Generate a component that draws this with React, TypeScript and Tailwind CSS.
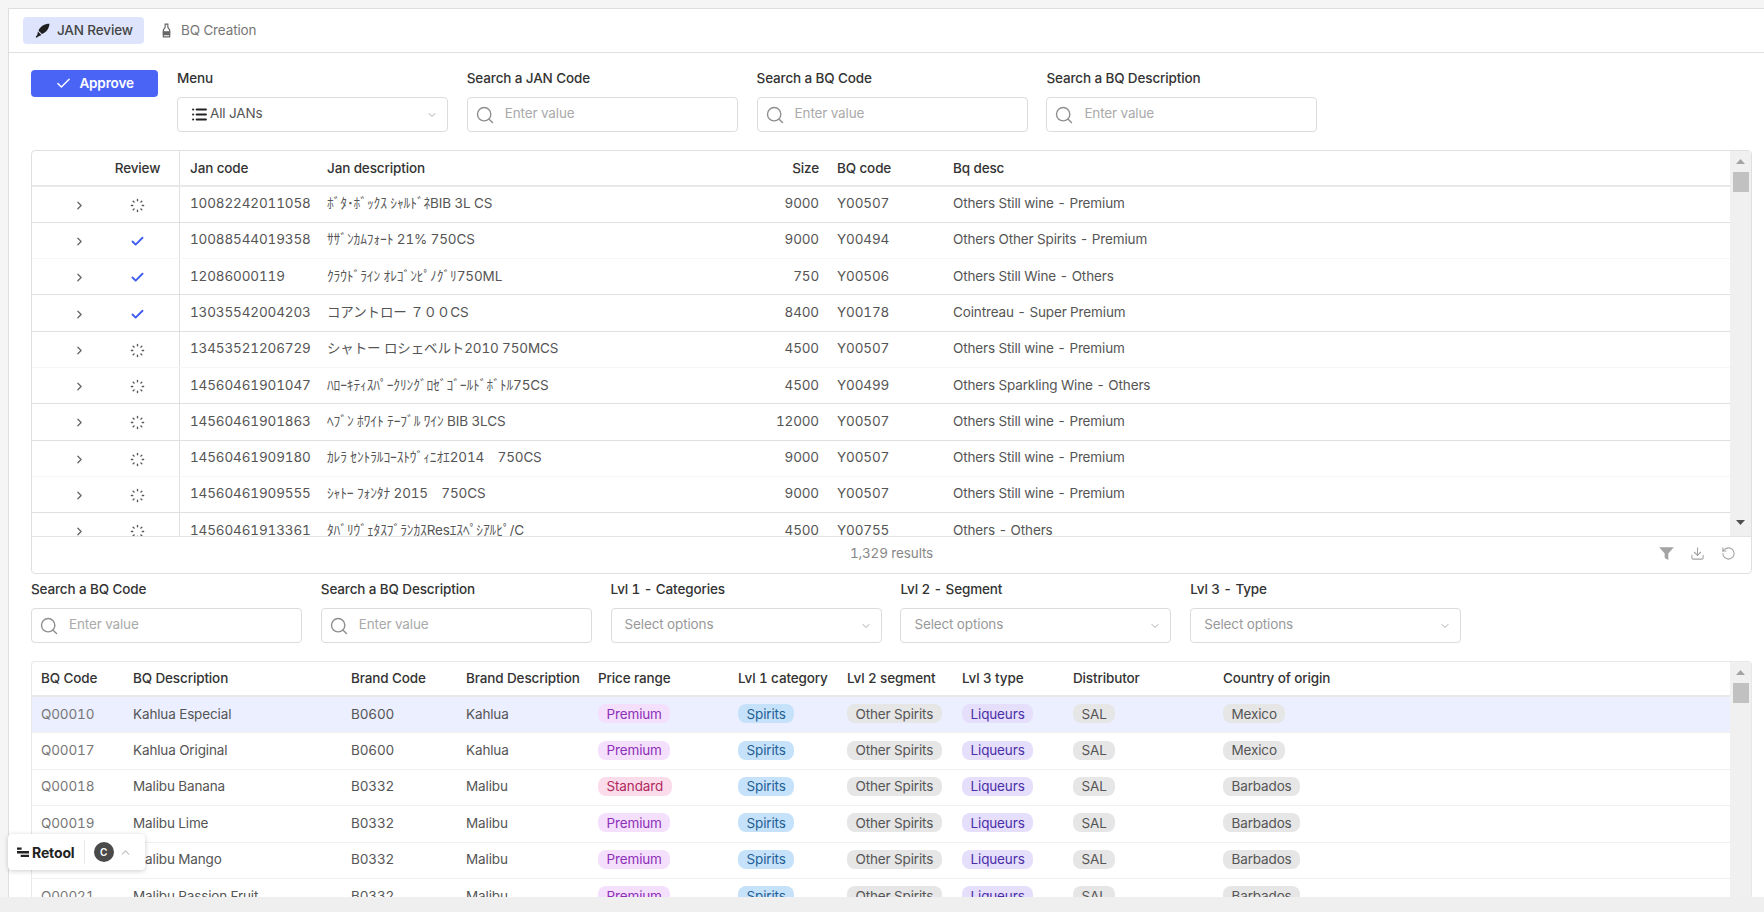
import { Check, ChevronDown, ChevronRight, ChevronUp, Download, List, RotateCcw, Search } from "lucide-react";

const janRows = [
  { code: "10082242011058", name: "ﾎﾞﾀ･ﾎﾞｯｸｽ ｼｬﾙﾄﾞﾈBIB 3L CS", size: "9000", bq: "Y00507", desc: "Others Still wine - Premium", done: false, line: true },
  { code: "10088544019358", name: "ｻｻﾞﾝｶﾑﾌｫｰﾄ 21% 750CS", size: "9000", bq: "Y00494", desc: "Others Other Spirits - Premium", done: true, line: false },
  { code: "12086000119", name: "ｸﾗｳﾄﾞﾗｲﾝ ｵﾚｺﾞﾝﾋﾟﾉｸﾞﾘ750ML", size: "750", bq: "Y00506", desc: "Others Still Wine - Others", done: true, line: true },
  { code: "13035542004203", name: "コアントロー ７００CS", size: "8400", bq: "Y00178", desc: "Cointreau - Super Premium", done: true, line: true },
  { code: "13453521206729", name: "シャトー ロシェベルト2010 750MCS", size: "4500", bq: "Y00507", desc: "Others Still wine - Premium", done: false, line: false },
  { code: "14560461901047", name: "ﾊﾛｰｷﾃｨｽﾊﾟｰｸﾘﾝｸﾞﾛｾﾞｺﾞｰﾙﾄﾞﾎﾞﾄﾙ75CS", size: "4500", bq: "Y00499", desc: "Others Sparkling Wine - Others", done: false, line: true },
  { code: "14560461901863", name: "ﾍﾌﾞﾝ ﾎﾜｲﾄ ﾃｰﾌﾞﾙ ﾜｲﾝ BIB 3LCS", size: "12000", bq: "Y00507", desc: "Others Still wine - Premium", done: false, line: true },
  { code: "14560461909180", name: "ｶﾚﾗ ｾﾝﾄﾗﾙｺｰｽﾄｳﾞｨﾆｵｴ2014　750CS", size: "9000", bq: "Y00507", desc: "Others Still wine - Premium", done: false, line: false },
  { code: "14560461909555", name: "ｼｬﾄｰ ﾌｫﾝﾀﾅ 2015　750CS", size: "9000", bq: "Y00507", desc: "Others Still wine - Premium", done: false, line: true },
  { code: "14560461913361", name: "ﾀﾊﾞﾘｳﾞｪﾀｽﾌﾞﾗﾝｶｽResｴｽﾍﾟｼｱﾙﾋﾟ/C", size: "4500", bq: "Y00755", desc: "Others - Others", done: false, line: true },
];

const bqRows = [
  { code: "Q00010", desc: "Kahlua Especial", brand: "B0600", brandDesc: "Kahlua", price: "Premium", country: "Mexico" },
  { code: "Q00017", desc: "Kahlua Original", brand: "B0600", brandDesc: "Kahlua", price: "Premium", country: "Mexico" },
  { code: "Q00018", desc: "Malibu Banana", brand: "B0332", brandDesc: "Malibu", price: "Standard", country: "Barbados" },
  { code: "Q00019", desc: "Malibu Lime", brand: "B0332", brandDesc: "Malibu", price: "Premium", country: "Barbados" },
  { code: "Q00020", desc: "Malibu Mango", brand: "B0332", brandDesc: "Malibu", price: "Premium", country: "Barbados" },
  { code: "Q00021", desc: "Malibu Passion Fruit", brand: "B0332", brandDesc: "Malibu", price: "Premium", country: "Barbados" },
];

const janCols = "grid grid-cols-[74px_74px_147px_433px_69px_124px_1fr]";
const bqCols = "grid grid-cols-[92px_218px_115px_132px_140px_109px_115px_111px_150px_1fr] pl-[9px]";

function Spinner() {
  return (
    <svg width="15" height="15" viewBox="0 0 16 16" stroke="#555" strokeWidth="1.5" strokeLinecap="round">
      <path d="M8 1.500v1.400M8 13.100v1.400M1.500 8h1.400M13.100 8h1.400M3.400 3.400l1 1M11.600 11.600l1 1M3.400 12.600l1-1M11.600 4.400l1-1" />
    </svg>
  );
}

function Pill({ className, children }: { className: string; children: string }) {
  return <span className={`inline-flex h-[19px] items-center rounded-lg px-[8.5px] ${className}`}>{children}</span>;
}

function Field({ label, children }: { label: string; children: React.ReactNode }) {
  return (
    <div className="w-[271px]">
      <div className="h-[17px] text-[13.5px] leading-[17px] font-medium text-[#333]">{label}</div>
      <div className="mt-[10px] flex h-[35px] items-center rounded border border-[#dcdcdc] bg-white">{children}</div>
    </div>
  );
}

function SearchField({ label }: { label: string }) {
  return (
    <Field label={label}>
      <Search size={20} strokeWidth={1.7} className="ml-[7px] shrink-0 text-[#8f8f8f]" />
      <input
        readOnly
        placeholder="Enter value"
        className="ml-[10px] w-full bg-transparent pb-[2px] outline-none placeholder:text-[#aaa]"
      />
    </Field>
  );
}

function SelectField({ label }: { label: string }) {
  return (
    <Field label={label}>
      <span className="ml-[13px] pb-[2px] text-[#999]">Select options</span>
      <ChevronDown size={12} strokeWidth={2} className="mr-[9px] ml-auto text-[#aaa]" />
    </Field>
  );
}

function Scrollbar({ downDark }: { downDark?: boolean }) {
  return (
    <div className="flex w-[21px] shrink-0 flex-col items-center bg-[#f0f0f0]">
      <svg width="9" height="6" viewBox="0 0 9 6" className="mt-[8px] shrink-0" fill="#a3a3a3">
        <path d="M4.500 0 9 5H0z" />
      </svg>
      <div className="mt-[7px] h-[20px] w-[16px] shrink-0 bg-[#c1c1c1]" />
      {downDark && (
        <svg width="9" height="6" viewBox="0 0 9 6" className="mt-auto mb-[10px] shrink-0" fill="#4f4f4f">
          <path d="M0 0h9L4.500 5z" />
        </svg>
      )}
    </div>
  );
}

export default function App() {
  return (
    <div className="flex h-[912px] w-[1764px] flex-col overflow-hidden bg-[#f5f5f5] font-['Inter','Noto_Sans_CJK_JP',sans-serif] text-[13.5px] tracking-[-0.01em] text-[#555] tabular-nums">
      <div className="relative ml-2 mt-2 flex min-h-0 flex-1 flex-col overflow-hidden border-t border-l border-[#dedede] bg-white">
        <div className="flex h-[44px] shrink-0 items-center gap-[18px] border-b border-[#e0e0e0] pl-[14px]">
          <div className="flex h-[27px] w-[121px] items-center gap-[7px] rounded bg-[#dde4fb] pl-[12px] font-medium text-[#444]">
            <svg width="15" height="15" viewBox="0 0 14 14" fill="#1f1f1f">
              <path d="M13.500.8C9 .8 5 3 3.300 7.200l3.200 3.100C10.800 8.800 13.200 5.200 13.500.8ZM2.700 8 2.200 11 .6 13l.8.800 2.100-1.500 2.500-1z" />
            </svg>
            JAN Review
          </div>
          <div className="flex items-center gap-[10px] text-[#777]">
            <svg width="9" height="15" viewBox="0 0 10 16" fill="none" stroke="#666" strokeWidth="1.300">
              <path d="M3.500 1h3v3.500l2 3V15h-7V7.500l2-3z" />
              <path d="M1.500 9.500h7v3h-7z" fill="#666" />
            </svg>
            BQ Creation
          </div>
        </div>

        <div className="flex min-h-0 flex-1 flex-col pt-[17px] pr-[12px] pl-[22px]">
          <div className="flex shrink-0 gap-[18.8px]">
            <button className="flex h-[27px] w-[127.2px] shrink-0 items-center justify-center gap-[7px] rounded bg-[#4a65f6] font-semibold text-white">
              <Check size={17} strokeWidth={2} />
              Approve
            </button>
            <Field label="Menu">
              <List size={17} strokeWidth={3} className="ml-[13px] shrink-0 text-[#222]" />
              <span className="ml-[2px] pb-[2px]">All JANs</span>
              <ChevronDown size={12} strokeWidth={2} className="mr-[9px] ml-auto text-[#aaa]" />
            </Field>
            <SearchField label="Search a JAN Code" />
            <SearchField label="Search a BQ Code" />
            <SearchField label="Search a BQ Description" />
          </div>

          <div className="mt-[18px] shrink-0 rounded border border-[#e0e0e0]">
            <div className="flex h-[385px]">
              <div className="min-w-0 flex-1 overflow-hidden">
                <div className={`${janCols} h-[35.5px] items-center border-b-2 border-[#e8e8e8] font-medium text-[#333]`}>
                  <div />
                  <div className="flex h-full items-center justify-center border-r border-[#e0e0e0] pr-[10px]">Review</div>
                  <div className="pl-[10px]">Jan code</div>
                  <div>Jan description</div>
                  <div className="pr-[10px] text-right">Size</div>
                  <div className="pl-[8px]">BQ code</div>
                  <div>Bq desc</div>
                </div>
                {janRows.map((row) => (
                  <div
                    key={row.code}
                    className={`${janCols} h-[36.3px] items-center border-b ${row.line ? "border-[#e0e0e0]" : "border-[#f6f6f6]"}`}
                  >
                    <div className="flex justify-center pt-[2px] pl-[20px]">
                      <ChevronRight size={13} strokeWidth={2.4} className="text-[#666]" />
                    </div>
                    <div className="flex h-full items-center justify-center border-r border-[#e0e0e0] pt-[2px] pr-[11px]">
                      {row.done ? <Check size={15} strokeWidth={3} className="text-[#3f5cf0]" /> : <Spinner />}
                    </div>
                    <div className="pb-[2px] pl-[10px]">{row.code}</div>
                    <div className="pb-[2px]">{row.name}</div>
                    <div className="pr-[10px] pb-[2px] text-right">{row.size}</div>
                    <div className="pb-[2px] pl-[8px]">{row.bq}</div>
                    <div className="pb-[2px]">{row.desc}</div>
                  </div>
                ))}
              </div>
              <Scrollbar downDark />
            </div>
            <div className="relative flex h-[37px] items-center justify-center border-t border-[#e4e4e4] pb-[3px] text-[#888]">
              1,329 results
              <div className="absolute right-[15px] flex items-center gap-[16px] text-[#a3a3a3]">
                <svg width="15" height="15" viewBox="0 0 15 15" fill="#a3a3a3">
                  <path d="M.200 1.200h14.600L9.300 7.500v6.500L5.700 12V7.500z" />
                </svg>
                <Download size={15} strokeWidth={1.7} />
                <RotateCcw size={15} strokeWidth={1.7} />
              </div>
            </div>
          </div>

          <div className="mt-[7px] flex shrink-0 gap-[18.8px]">
            <SearchField label="Search a BQ Code" />
            <SearchField label="Search a BQ Description" />
            <SelectField label="Lvl 1 - Categories" />
            <SelectField label="Lvl 2 - Segment" />
            <SelectField label="Lvl 3 - Type" />
          </div>

          <div className="mt-[18px] flex min-h-0 flex-1 rounded-t border-x border-t border-[#e8e8e8]">
            <div className="min-w-0 flex-1 overflow-hidden">
              <div className={`${bqCols} h-[35px] items-center border-b-2 border-[#e8e8e8] font-medium text-[#333]`}>
                <div>BQ Code</div>
                <div>BQ Description</div>
                <div>Brand Code</div>
                <div>Brand Description</div>
                <div>Price range</div>
                <div>Lvl 1 category</div>
                <div>Lvl 2 segment</div>
                <div>Lvl 3 type</div>
                <div>Distributor</div>
                <div>Country of origin</div>
              </div>
              {bqRows.map((row, i) => (
                <div
                  key={row.code}
                  className={`${bqCols} h-[36.4px] items-center border-b border-[#f0f0f0] pb-[2px] ${i === 0 ? "bg-[#ebefff]" : ""}`}
                >
                  <div className="text-[#777]">{row.code}</div>
                  <div>{row.desc}</div>
                  <div>{row.brand}</div>
                  <div>{row.brandDesc}</div>
                  <div>
                    {row.price === "Premium" ? (
                      <Pill className="bg-[#f4e0fc] text-[#8e2fb8]">Premium</Pill>
                    ) : (
                      <Pill className="bg-[#fbdcea] text-[#b02860]">Standard</Pill>
                    )}
                  </div>
                  <div>
                    <Pill className="bg-[#c6e2fa] text-[#1f5f96]">Spirits</Pill>
                  </div>
                  <div>
                    <Pill className="bg-[#e6e6e6] text-[#555]">Other Spirits</Pill>
                  </div>
                  <div>
                    <Pill className="bg-[#e6dffc] text-[#4a2fa8]">Liqueurs</Pill>
                  </div>
                  <div>
                    <Pill className="bg-[#e6e6e6] text-[#555]">SAL</Pill>
                  </div>
                  <div>
                    <Pill className="bg-[#e6e6e6] text-[#555]">{row.country}</Pill>
                  </div>
                </div>
              ))}
            </div>
            <Scrollbar />
          </div>
        </div>
      </div>
      <div className="h-[15px] shrink-0 bg-[#efefef]" />

      <div className="absolute top-[834px] left-[8px] flex h-[36px] w-[137px] items-center rounded bg-white shadow-[0_1px_5px_rgba(0,0,0,0.2)]">
        <svg width="12" height="11" viewBox="0 0 13 11" fill="#222" className="ml-[9px]">
          <path d="M0 0h5v2.500H0zM0 4h13v2.500H0zM4 8h9v2.500H4z" />
        </svg>
        <span className="ml-[3px] text-[14px] font-bold text-[#222]">Retool</span>
        <div className="ml-[9px] h-[24px] w-px bg-[#e8e8e8]" />
        <div className="ml-[9px] flex size-[20px] items-center justify-center rounded-full bg-[#4a4a4a] text-[10px] font-semibold text-white">
          C
        </div>
        <ChevronUp size={13} strokeWidth={2.4} className="ml-[5px] text-[#c4c4c4]" />
      </div>
    </div>
  );
}
